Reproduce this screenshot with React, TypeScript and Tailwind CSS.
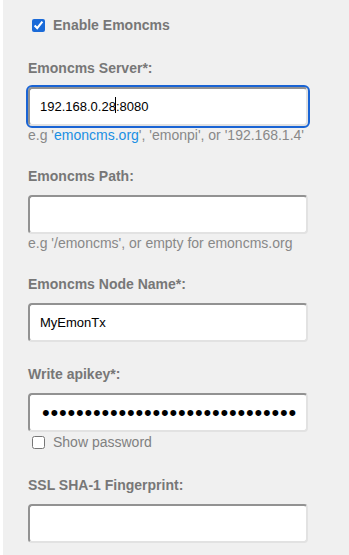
import React from 'react';

const font = { fontFamily: '"Liberation Sans", Arial, sans-serif' };

const inputCls =
  "block w-[280px] h-[39px] bg-white border-2 border-t-[#929292] border-l-[#929292] border-r-[#e2e2e2] border-b-[#e2e2e2] rounded-[4px] pl-[10px] text-[13px] text-black outline-none";

const Label = ({ children }: { children: React.ReactNode }) => (
  <label className="block text-[14px] leading-[20px] font-bold text-[#777] mb-[9px]">{children}</label>
);

const Help = ({ children }: { children: React.ReactNode }) => (
  <p className="text-[14px] leading-[18px] text-[#888]">{children}</p>
);

const App = () => {
  return (
    <div className="min-h-screen bg-white pl-[3px]" style={font}>
      <div className="min-h-screen bg-[#f0f0f0] pl-[25px] pt-[15px] pb-4">
        {/* enable toggle */}
        <label className="flex items-center h-[20px] gap-[8px] pl-1 text-[14px] font-bold text-[#777]">
          <input type="checkbox" defaultChecked className="w-[13px] h-[13px] m-0 accent-[#1a6ad8]" />
          Enable Emoncms
        </label>

        <div className="mt-[23px]">
          <Label>Emoncms Server*:</Label>
          <div className="relative w-[280px]">
            <input
              className={inputCls + " outline-2 outline-solid outline-offset-0 outline-[#1a64d4]"}
              defaultValue="192.168.0.28:8080"
            />
            <span className="absolute left-[87px] top-[10px] w-px h-[16px] bg-black"></span>
          </div>
          <Help>
            e.g '<span className="text-[#1a8fe3]">emoncms.org</span>', 'emonpi', or '192.168.1.4'
          </Help>
        </div>

        <div className="mt-[22px]">
          <Label>Emoncms Path:</Label>
          <input className={inputCls} defaultValue="" />
          <Help>e.g '/emoncms', or empty for emoncms.org</Help>
        </div>

        <div className="mt-[22px]">
          <Label>Emoncms Node Name*:</Label>
          <input className={inputCls} defaultValue="MyEmonTx" />
        </div>

        <div className="mt-[22px]">
          <Label>Write apikey*:</Label>
          <input
            type="password"
            className={inputCls + " pl-[12px] text-[22px] tracking-[0.8px]"}
            defaultValue="abcdefghijklmnopqrstuvwxyz1234"
          />
          <label className="flex items-center h-[21px] gap-[8px] pl-1 text-[14px] text-[#808080]">
            <input type="checkbox" className="w-[13px] h-[13px] m-0" />
            Show password
          </label>
        </div>

        <div className="mt-[22px]">
          <Label>SSL SHA-1 Fingerprint:</Label>
          <input className={inputCls} defaultValue="" />
        </div>
      </div>
    </div>
  );
};

export default App;
